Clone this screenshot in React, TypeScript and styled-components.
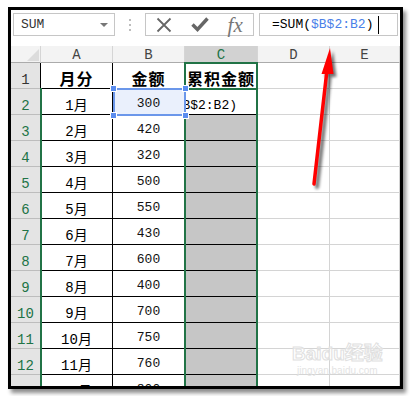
import { Fragment } from 'react'
import styled, { createGlobalStyle } from 'styled-components'

const GlobalStyle = createGlobalStyle`
  body {
    margin: 0;
    background: #fff;
  }
`

const Page = styled.div`
  position: relative;
  width: 410px;
  height: 396px;
  overflow: hidden;
  padding: 7px 0 0 8px;
  box-sizing: border-box;
  font-family: "Liberation Mono", "Noto Sans CJK SC", monospace;
  color: #000;
`

const Frame = styled.div`
  width: 395px;
  height: 382px;
  box-sizing: border-box;
  border: 3px solid #000;
  box-shadow: 3px 4px 4px rgba(0, 0, 0, 0.45);
  overflow: hidden;
  background: #fff;
`

const Toolbar = styled.div`
  display: flex;
  align-items: flex-start;
  height: 36px;
  padding: 3px 0 0 2px;
  box-sizing: border-box;
`

const NameBox = styled.div`
  width: 102px;
  height: 23px;
  box-sizing: border-box;
  border: 1px solid #c6c6c6;
  display: flex;
  align-items: center;
  justify-content: space-between;
  padding: 0 6px 0 7px;
  font-size: 13px;
  color: #333;
`

const DropArrow = styled.span`
  width: 0;
  height: 0;
  border-left: 4px solid transparent;
  border-right: 4px solid transparent;
  border-top: 4px solid #777;
`

const Grip = styled.div`
  width: 30px;
  height: 23px;
  display: flex;
  flex-direction: column;
  align-items: center;
  justify-content: center;
  gap: 3px;
`

const GripDot = styled.span`
  width: 2px;
  height: 2px;
  background: #bdbdbd;
`

const ButtonsBox = styled.div`
  width: 109px;
  height: 23px;
  box-sizing: border-box;
  border: 1px solid #c6c6c6;
  display: flex;
  align-items: center;
`

const IconSlot = styled.div`
  flex: 1;
  display: flex;
  align-items: center;
  justify-content: center;
`

const Fx = styled.span`
  font-family: "Liberation Serif", serif;
  font-style: italic;
  font-size: 21px;
  color: #777;
  line-height: 20px;
`

const FormulaBox = styled.div`
  margin-left: 5px;
  width: 139px;
  height: 23px;
  box-sizing: border-box;
  border: 1px solid #c6c6c6;
  display: flex;
  align-items: center;
  padding-left: 12px;
  font-size: 13px;
  white-space: nowrap;
`

const Ref = styled.span`
  color: #4a80e8;
`

const Caret = styled.span`
  width: 1px;
  height: 18px;
  margin-left: 5px;
  background: #000;
`

const SheetArea = styled.div`
  position: relative;
`

const Sheet = styled.div`
  display: grid;
  grid-template-columns: 30px 72px 72px 73px 72px 70px;
  grid-template-rows: 17px repeat(13, 26px);
`

const Corner = styled.div`
  background: #f3f3f3;
  border-right: 1px solid #d5d5d5;
  border-bottom: 1px solid #ababab;
  display: flex;
  align-items: flex-end;
  justify-content: flex-end;
  padding: 0 1px 1px 0;
`

const ColHead = styled.div<{ $active?: boolean }>`
  background: ${(p) => (p.$active ? '#d2d2d2' : '#f3f3f3')};
  color: ${(p) => (p.$active ? '#217346' : '#444')};
  border-right: 1px solid #d5d5d5;
  border-bottom: 1px solid #ababab;
  display: flex;
  align-items: flex-end;
  justify-content: center;
  font-size: 14px;
  line-height: 14px;
`

const RowHead = styled.div<{ $active?: boolean }>`
  background: #e4e4e4;
  color: ${(p) => (p.$active ? '#217346' : '#333')};
  border-right: 1px solid #000;
  border-bottom: 1px solid #bdbdbd;
  display: flex;
  align-items: flex-end;
  justify-content: center;
  font-size: 14px;
  line-height: 14px;
  padding-bottom: 1px;
`

const Cell = styled.div<{ $light?: boolean; $fill?: string; $bold?: boolean; $edit?: boolean }>`
  border-right: 1px solid ${(p) => (p.$light ? '#d4d4d4' : '#000')};
  border-bottom: 1px solid ${(p) => (p.$light ? '#d4d4d4' : '#000')};
  background: ${(p) => p.$fill ?? '#fff'};
  display: flex;
  align-items: ${(p) => (p.$edit ? 'flex-end' : 'center')};
  justify-content: ${(p) => (p.$edit ? 'flex-end' : 'center')};
  padding: ${(p) => (p.$edit ? '0 20px 1px 0' : '4px 0 0 0')};
  font-size: ${(p) => (p.$bold ? 16 : 14)}px;
  font-weight: ${(p) => (p.$bold ? 700 : 400)};
  letter-spacing: ${(p) => (p.$bold ? '1px' : '0')};
  overflow: hidden;
  white-space: nowrap;
  min-width: 0;
`

const Num = styled.span`
  font-size: 13px;
  color: #111;
`

const Formula = styled.span`
  font-size: 13px;
`

// selection outlines drawn over the grid
const ColumnOutline = styled.div`
  position: absolute;
  left: 173px;
  top: 16px;
  width: 74px;
  height: 400px;
  box-sizing: border-box;
  border: 2px solid #217346;
  pointer-events: none;
`

const HeadOutline = styled(ColumnOutline)`
  height: 28px;
`

const RowsLine = styled.div`
  position: absolute;
  left: 29px;
  top: 42px;
  width: 2px;
  height: 400px;
  background: #217346;
`

const ActiveCell = styled.div`
  position: absolute;
  left: 102px;
  top: 42px;
  width: 73px;
  height: 28px;
  box-sizing: border-box;
  border: 2px solid #6b97ea;
  pointer-events: none;
`

const Handle = styled.span<{ $right?: boolean; $bottom?: boolean }>`
  position: absolute;
  width: 5px;
  height: 5px;
  background: #5b8def;
  border: 1px solid #fff;
  ${(p) => (p.$right ? 'right: -5px;' : 'left: -5px;')}
  ${(p) => (p.$bottom ? 'bottom: -5px;' : 'top: -5px;')}
`

const Overlay = styled.svg`
  position: absolute;
  left: 0;
  top: 0;
  pointer-events: none;
`

const Watermark = styled.div`
  position: absolute;
  left: 292px;
  top: 343px;
  display: flex;
  flex-direction: column;
  align-items: center;
  pointer-events: none;
  white-space: nowrap;
  font-family: "Liberation Sans", "Noto Sans CJK SC", sans-serif;
`

const MarkTitle = styled.div`
  font-size: 19px;
  line-height: 22px;
  font-weight: 700;
  color: rgba(255, 255, 255, 0.5);
  -webkit-text-stroke: 1px #e0e0e0;
`

const MarkSub = styled.div`
  font-size: 10px;
  line-height: 12px;
  color: #e4e4e4;
`

const rows: [string, string][] = [
  ['1月', '300'],
  ['2月', '420'],
  ['3月', '320'],
  ['4月', '500'],
  ['5月', '550'],
  ['6月', '430'],
  ['7月', '600'],
  ['8月', '400'],
  ['9月', '700'],
  ['10月', '750'],
  ['11月', '760'],
  ['12月', '800'],
]

const cols = ['A', 'B', 'C', 'D', 'E']

function App() {
  return (
    <Page>
      <GlobalStyle />
      <Frame>
        <Toolbar>
          <NameBox>
            SUM
            <DropArrow />
          </NameBox>
          <Grip>
            <GripDot />
            <GripDot />
            <GripDot />
          </Grip>
          <ButtonsBox>
            <IconSlot>
              <svg width="16" height="16" viewBox="0 0 16 16">
                <path d="M1.5 1.5 L14.5 14.5 M14.5 1.5 L1.5 14.5" stroke="#666" strokeWidth="1.8" fill="none" />
              </svg>
            </IconSlot>
            <IconSlot>
              <svg width="18" height="15" viewBox="0 0 18 15">
                <path d="M1.5 7.5 L6.5 12.5 L16.5 1.5" stroke="#666" strokeWidth="3.4" fill="none" strokeLinejoin="miter" />
              </svg>
            </IconSlot>
            <IconSlot>
              <Fx>fx</Fx>
            </IconSlot>
          </ButtonsBox>
          <FormulaBox>
            =SUM(<Ref>$B$2:B2</Ref>)
            <Caret />
          </FormulaBox>
        </Toolbar>

        <SheetArea>
          <Sheet>
            <Corner>
              <svg width="12" height="12" viewBox="0 0 12 12">
                <polygon points="12,0 12,12 0,12" fill="#dcdcdc" />
              </svg>
            </Corner>
            {cols.map((c) => (
              <ColHead key={c} $active={c === 'C'}>
                {c}
              </ColHead>
            ))}

            <RowHead>1</RowHead>
            <Cell $bold>月分</Cell>
            <Cell $bold>金额</Cell>
            <Cell $bold>累积金额</Cell>
            <Cell $light />
            <Cell $light />

            {rows.map(([month, amount], i) => (
              <Fragment key={month}>
                <RowHead $active>{i + 2}</RowHead>
                <Cell>{month}</Cell>
                <Cell $fill={i === 0 ? '#eaf0fc' : undefined}>
                  <Num>{amount}</Num>
                </Cell>
                {i === 0 ? (
                  <Cell $edit>
                    <Formula>=SUM($B$2:B2)</Formula>
                  </Cell>
                ) : (
                  <Cell $fill="#c6c6c6" />
                )}
                <Cell $light />
                <Cell $light />
              </Fragment>
            ))}
          </Sheet>

          <RowsLine />
          <ColumnOutline />
          <HeadOutline />
          <ActiveCell>
            <Handle />
            <Handle $right />
            <Handle $bottom />
            <Handle $right $bottom />
          </ActiveCell>
        </SheetArea>
      </Frame>

      <Watermark>
        <MarkTitle>Baidu经验</MarkTitle>
        <MarkSub>jingyan.baidu.com</MarkSub>
      </Watermark>

      <Overlay width="410" height="396" viewBox="0 0 410 396">
        <defs>
          <filter id="blur" x="-50%" y="-50%" width="200%" height="200%">
            <feGaussianBlur stdDeviation="1.6" />
          </filter>
        </defs>
        <g filter="url(#blur)" opacity="0.55" transform="translate(3 3)">
          <line x1="314" y1="184" x2="327" y2="70" stroke="#000" strokeWidth="4" strokeLinecap="round" />
          <polygon points="330,48 321.5,74 333.5,74" fill="#000" />
        </g>
        <line x1="314" y1="184" x2="327" y2="70" stroke="#f00" strokeWidth="3.5" strokeLinecap="round" />
        <polygon points="330,48 321.5,74 333.5,74" fill="#f00" />
      </Overlay>
    </Page>
  )
}

export default App
